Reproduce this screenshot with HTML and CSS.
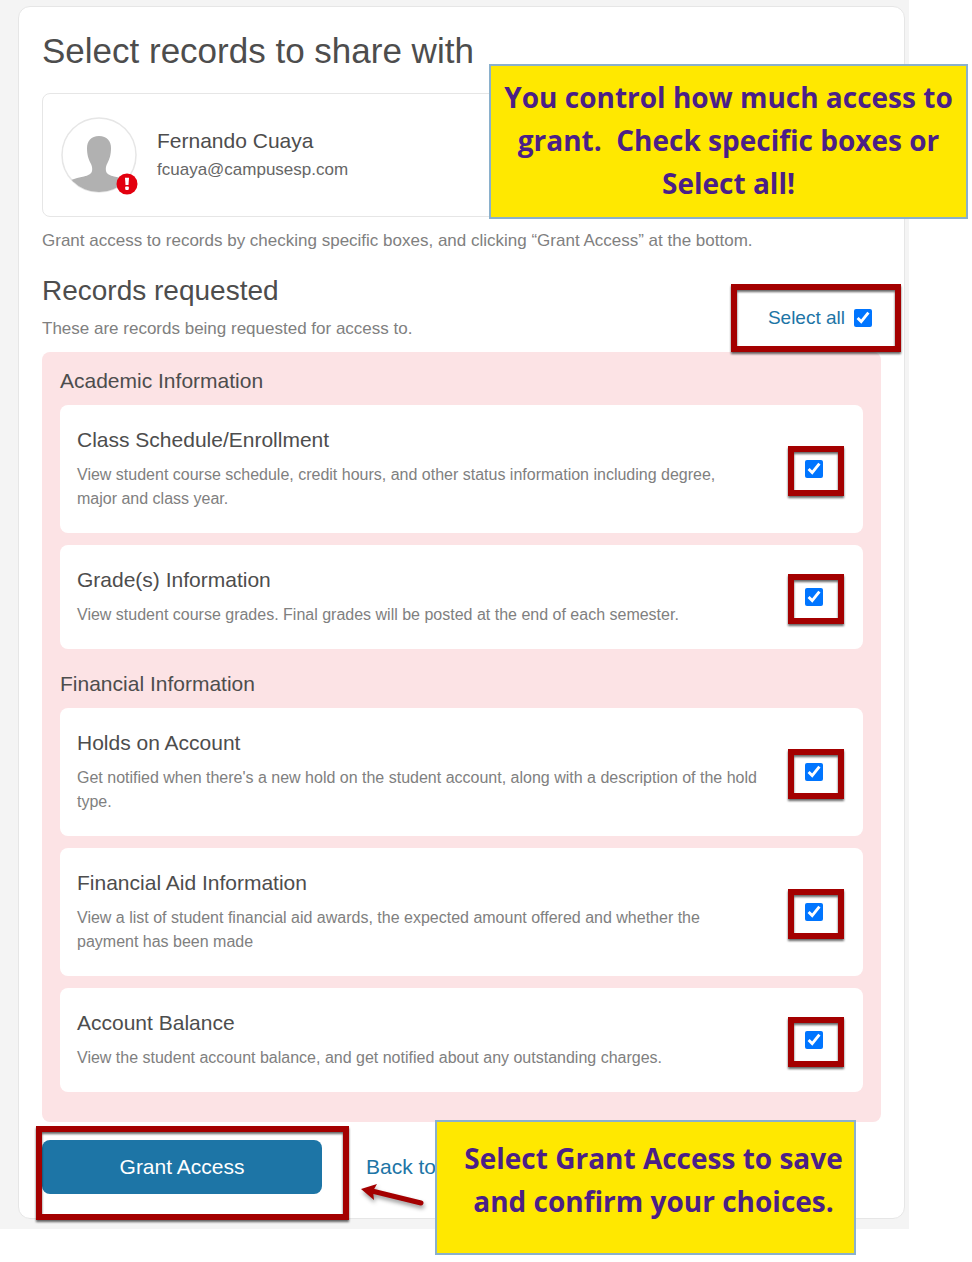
FILE: index.html
```html
<!DOCTYPE html>
<html lang="en">
  <head>
    <meta charset="utf-8" />
    <meta name="viewport" content="width=device-width, initial-scale=1" />
    <title>Select records to share</title>
    <link rel="stylesheet" href="styles.css">
  </head>
  <body>
    <div class="guide">
      <main class="page">
        <form class="panel">
          <h1>Select records to share with</h1>
          <div class="person">
            <div class="avatar">
              <svg viewBox="0 0 76 76" width="76" height="76" aria-hidden="true">
                <clipPath id="round"><circle cx="38" cy="38" r="37" /></clipPath>
                <circle cx="38" cy="38" r="37" fill="#fff" stroke="#e6e6e6" stroke-width="1.5" />
                <path clip-path="url(#round)" fill="#b1b1b1" d="M38 19c-8 0-12 5-12 12 0 7 1.500 11 3.500 15 1.500 3 2 5 1.500 8-.5 3-4 4.500-8 5.500-5 1.200-9 1.800-13 3.500v13h56V63c-4-1.700-8-2.300-13-3.500-4-1-7.500-2.500-8-5.500-.5-3 0-5 1.500-8 2-4 3.500-8 3.500-15 0-7-4-12-12-12z" />
              </svg>
              <svg class="alert" viewBox="0 0 22 22" width="22" height="22" aria-hidden="true">
                <circle cx="11" cy="11" r="10.500" fill="#e3000f" />
                <path d="M9 4.800h4l-.5 7.200h-3z" fill="#fff" />
                <rect x="9.200" y="13.500" width="3.600" height="3.400" rx="0.800" fill="#fff" />
              </svg>
            </div>
            <div class="person-text">
              <p class="name">Fernando Cuaya</p>
              <p class="email">fcuaya@campusesp.com</p>
            </div>
          </div>
          <p class="hint">Grant access to records by checking specific boxes, and clicking “Grant Access” at the bottom.</p>

          <div class="section-head">
            <div>
              <h2>Records requested</h2>
              <p class="hint">These are records being requested for access to.</p>
            </div>
            <label class="select-all framed">
              Select all
              <input type="checkbox" id="select-all" checked />
            </label>
          </div>

          <div class="records">
            <h3>Academic Information</h3>
            <div class="group">
              <div class="record">
                <div class="record-text">
                  <label class="title" for="schedule">Class Schedule/Enrollment</label>
                  <p>View student course schedule, credit hours, and other status information including degree, major and class year.</p>
                </div>
                <span class="pick framed"><input type="checkbox" id="schedule" checked /></span>
              </div>
              <div class="record">
                <div class="record-text">
                  <label class="title" for="grades">Grade(s) Information</label>
                  <p>View student course grades. Final grades will be posted at the end of each semester.</p>
                </div>
                <span class="pick framed"><input type="checkbox" id="grades" checked /></span>
              </div>
            </div>
            <h3>Financial Information</h3>
            <div class="group">
              <div class="record">
                <div class="record-text">
                  <label class="title" for="holds">Holds on Account</label>
                  <p>Get notified when there's a new hold on the student account, along with a description of the hold type.</p>
                </div>
                <span class="pick framed"><input type="checkbox" id="holds" checked /></span>
              </div>
              <div class="record">
                <div class="record-text">
                  <label class="title" for="aid">Financial Aid Information</label>
                  <p>View a list of student financial aid awards, the expected amount offered and whether the payment has been made</p>
                </div>
                <span class="pick framed"><input type="checkbox" id="aid" checked /></span>
              </div>
              <div class="record">
                <div class="record-text">
                  <label class="title" for="balance">Account Balance</label>
                  <p>View the student account balance, and get notified about any outstanding charges.</p>
                </div>
                <span class="pick framed"><input type="checkbox" id="balance" checked /></span>
              </div>
            </div>
          </div>

          <div class="actions">
            <div class="submit framed">
              <button type="submit">Grant Access</button>
            </div>
            <a href="#">Back to</a>
          </div>
        </form>
      </main>

      <aside class="callout callout-top">You control how much access to grant.&nbsp; Check specific boxes or Select all!</aside>
      <aside class="callout callout-bottom">Select Grant Access to save and confirm your choices.</aside>
      <svg class="arrow" viewBox="0 0 70 30" width="70" height="30" aria-hidden="true">
        <path d="M12 7L61 19" stroke="#a40000" stroke-width="5" stroke-linecap="round" />
        <path d="M1 5L17 0L13 7L14 16Z" fill="#a40000" />
      </svg>
    </div>
    <script>
      const selectAll = document.getElementById("select-all");
      const boxes = document.querySelectorAll(".pick input");

      selectAll.addEventListener("change", () => {
        boxes.forEach((box) => {
          box.checked = selectAll.checked;
        });
      });
    </script>
  </body>
</html>
```

FILE: styles.css
```css
* {
  box-sizing: border-box;
}
body {
  margin: 0;
  background: #fff;
  font-family: "Helvetica Neue", Helvetica, "Liberation Sans", Arial, sans-serif;
  font-size: 16px;
  line-height: 24px;
  color: #4d4d4d;
}
h1,
h2,
h3,
p {
  margin: 0;
  font-weight: normal;
}
.guide {
  position: relative;
  padding: 0 63px 33px 0;
}
.page {
  padding: 6px 4px 10px 18px;
  background: #f4f4f4;
}
.panel {
  padding: 22px 23px 24px;
  background: #fff;
  border: 1px solid #e6e6e6;
  border-radius: 12px;
}
h1 {
  margin-bottom: 20px;
  font-size: 35px;
  line-height: 44px;
}
.person {
  display: flex;
  align-items: center;
  gap: 20px;
  padding: 23px 18px;
  border: 1px solid #e6e6e6;
  border-radius: 8px;
}
.person-text {
  padding-bottom: 4px;
}
.avatar {
  position: relative;
  height: 76px;
}
.alert {
  position: absolute;
  right: -1px;
  bottom: -2px;
}
.name {
  font-size: 21px;
  line-height: 34px;
}
.email {
  font-size: 17px;
  color: #666;
}
.hint {
  font-size: 17px;
  color: #808080;
}
.person + .hint {
  margin-top: 12px;
}
.section-head {
  display: flex;
  justify-content: space-between;
  align-items: center;
  padding: 20px 9px 11px 0;
}
h2 {
  margin-bottom: 8px;
  font-size: 28px;
  line-height: 36px;
}
.select-all {
  display: flex;
  align-items: center;
  gap: 9px;
  margin-top: 22px;
  font-size: 19px;
  color: #1d75a6;
}
input[type="checkbox"] {
  width: 18px;
  height: 18px;
  margin: 0;
  accent-color: #0075ff;
}
.records {
  padding: 17px 18px 30px;
  background: #fce3e5;
  border-radius: 8px;
}
h3 {
  margin-bottom: 12px;
  font-size: 21px;
}
.group + h3 {
  margin-top: 23px;
}
.group {
  display: flex;
  flex-direction: column;
  gap: 12px;
}
.record {
  display: flex;
  align-items: center;
  justify-content: space-between;
  gap: 24px;
  padding: 18px 40px 18px 17px;
  background: #fff;
  border-radius: 8px;
}
.title {
  display: block;
  margin-bottom: 6px;
  font-size: 21px;
  line-height: 34px;
}
.record p {
  max-width: 682px;
  margin-bottom: 4px;
  color: #808080;
}
.pick {
  height: 18px;
}
.pick input {
  display: block;
}
.actions {
  display: flex;
  align-items: center;
  gap: 44px;
  margin-top: 18px;
  font-size: 21px;
}
.submit {
  flex: 0 0 280px;
}
button {
  display: block;
  width: 100%;
  padding: 15px;
  border: none;
  border-radius: 8px;
  background: #1d75a6;
  color: #fff;
  font: inherit;
  cursor: pointer;
}
a {
  color: #1d75a6;
  text-decoration: none;
}

/* red frames drawn over the controls */
.framed {
  position: relative;
}
.framed::after {
  content: "";
  position: absolute;
  inset: -14px -21px -18px -17px;
  border: 6px solid #a40000;
  filter: drop-shadow(0 2px 1px rgba(0, 0, 0, 0.6));
  pointer-events: none;
}
.select-all::after {
  inset: -22px -29px -22px -37px;
}
.submit::after {
  inset: -14px -27px -26px -6px;
}

.callout {
  position: absolute;
  border: 2px solid #8ab0cc;
  background: #ffe800;
  color: #4b1f87;
  font-family: "Trebuchet MS", "Open Sans", sans-serif;
  font-size: 28px;
  font-weight: 700;
  line-height: 43px;
  text-align: center;
}
.callout-top {
  top: 64px;
  right: 4px;
  width: 479px;
  padding: 10px 4px 12px;
}
.callout-bottom {
  top: 1120px;
  left: 435px;
  width: 421px;
  padding: 15px 4px 30px 20px;
}
.arrow {
  position: absolute;
  top: 1184px;
  left: 360px;
  fill: none;
  filter: drop-shadow(1px 3px 2px rgba(0, 0, 0, 0.4));
}
```
